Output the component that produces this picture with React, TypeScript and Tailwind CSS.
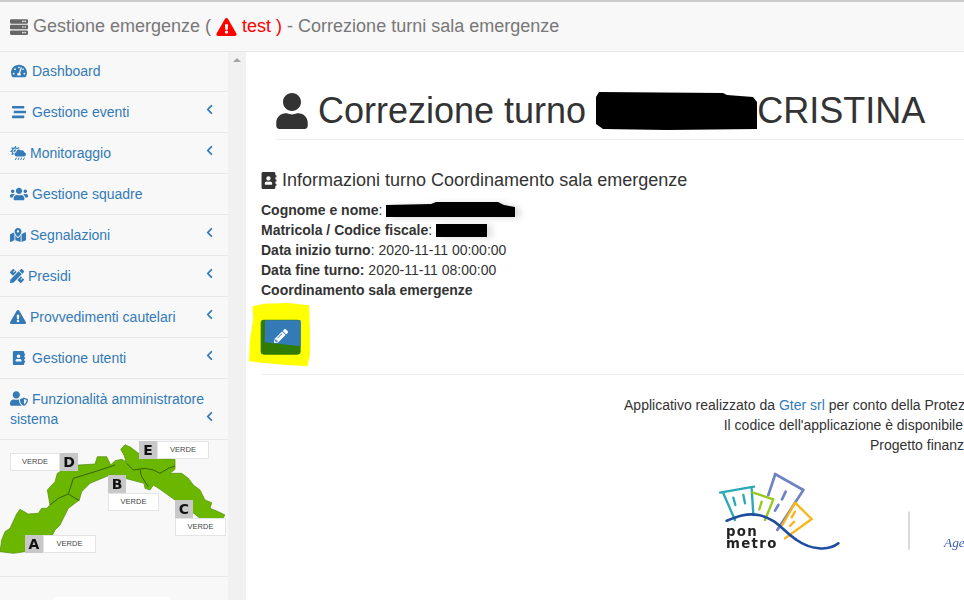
import { ReactNode } from "react";
import {
  FaAddressBook,
  FaChevronLeft,
  FaCloudSunRain,
  FaExclamationTriangle,
  FaMapMarkedAlt,
  FaPencilAlt,
  FaPencilRuler,
  FaServer,
  FaStream,
  FaTachometerAlt,
  FaUser,
  FaUserShield,
  FaUsers,
} from "react-icons/fa";

type MenuItem = {
  label: ReactNode;
  icon: ReactNode;
  pad: string;
  arrow?: boolean;
  height: string;
};

const menu: MenuItem[] = [
  { label: "Dashboard", icon: <FaTachometerAlt className="w-[16px] h-[16px]" />, pad: "pl-[11px] pb-[1px] gap-[5px]", height: "h-[40px]" },
  { label: "Gestione eventi", icon: <FaStream className="w-[14px] h-[14px]" />, pad: "pl-[12px] gap-[6px]", arrow: true, height: "h-[41px]" },
  { label: "Monitoraggio", icon: <FaCloudSunRain className="w-[16px] h-[16px]" />, pad: "pl-[10px] gap-[4px]", arrow: true, height: "h-[41px]" },
  { label: "Gestione squadre", icon: <FaUsers className="w-[18px] h-[16px]" />, pad: "pl-[10px] gap-[4px]", height: "h-[41px]" },
  { label: "Segnalazioni", icon: <FaMapMarkedAlt className="w-[16px] h-[16px]" />, pad: "pl-[10px] gap-[4px]", arrow: true, height: "h-[41px]" },
  { label: "Presidi", icon: <FaPencilRuler className="w-[14px] h-[14px]" />, pad: "pl-[10px] gap-[4px]", arrow: true, height: "h-[41px]" },
  { label: "Provvedimenti cautelari", icon: <FaExclamationTriangle className="w-[16px] h-[16px]" />, pad: "pl-[10px] gap-[4px]", arrow: true, height: "h-[41px]" },
  { label: "Gestione utenti", icon: <FaAddressBook className="w-[14px] h-[14px]" />, pad: "pl-[12px] gap-[6px]", arrow: true, height: "h-[41px]" },
];

const letterBox =
  "w-[18px] h-[18px] bg-[#c8c8c8] flex items-center justify-center font-['DejaVu_Sans'] font-bold text-[14px] text-[#111] blur-[0.3px]";
const verdeBox =
  "h-[18px] bg-white border border-[#e4e4e4] flex items-center justify-center font-['Liberation_Sans'] text-[7.5px] text-[#444]";

// black marker scribbles drawn over the personal data
const Scribble = ({ w, h, points, className }: { w: number; h: number; points: string; className: string }) => (
  <svg viewBox={`0 0 ${w} ${h}`} className={`inline-block ${className}`}>
    <path d={`M${points} Z`} fill="#000" />
  </svg>
);

const Sidebar = () => (
  <div className="w-[228px] shrink-0 bg-[#f8f8f8] h-full flex flex-col text-[14px] leading-[20px] text-[#337ab7]">
    {menu.map((item, i) => (
      <div
        key={i}
        className={`flex items-center border-b border-[#e7e7e7] ${item.height} ${item.pad}`}
      >
        {item.icon}
        <span>{item.label}</span>
        {item.arrow && (
          <FaChevronLeft className="ml-auto mr-[13px] mb-[6px] w-[11px] h-[11px]" />
        )}
      </div>
    ))}
    <div className="h-[61px] flex items-center border-b border-[#e7e7e7] pl-[10px]">
      <div className="w-[197px] shrink-0">
        <FaUserShield className="inline w-[18px] h-[15px] mr-[4px] align-[-2px]" />
        Funzionalità amministratore sistema
      </div>
      <FaChevronLeft className="-ml-[3px] mt-[14px] w-[11px] h-[11px] shrink-0" />
    </div>
    <AlertMap />
    <div className="flex-1 relative">
      <div className="absolute left-[53px] top-[20px] w-[117px] h-[10px] bg-white" />
    </div>
  </div>
);

const AlertMap = () => (
  <div className="relative h-[137px] border-b border-[#e7e7e7] shrink-0 overflow-hidden">
    <svg viewBox="0 0 738 408" className="absolute left-0 top-0 w-[246px] h-[136px] blur-[0.3px]">
      <path
        d="M0 335 L5 300 L15 275 L30 265 L50 222 L60 208 L85 222 L115 220 L125 205 L140 205 L150 195 L142 150 L165 125 L172 100 L180 95 L235 75 L285 72 L292 50 L320 50 L332 75 L345 62 L365 58 L378 65 L372 45 L362 28 L375 14 L392 22 L418 42 L470 55 L525 58 L525 88 L510 100 L545 100 L565 115 L580 135 L600 150 L615 180 L635 188 L630 205 L655 215 L675 225 L665 240 L645 245 L600 235 L575 215 L525 180 L480 148 L460 135 L450 150 L435 145 L432 130 L375 115 L330 105 L270 130 L245 155 L238 180 L205 205 L180 255 L165 270 L150 300 L130 320 L75 335 L40 340 Z"
        fill="#6bb700"
        stroke="#4d8a00"
        strokeWidth="2"
      />
      <path
        d="M150 195 L175 175 L205 162 L238 182 M205 162 L220 115 L285 95 L345 75 M380 70 L400 90 L435 85 L460 90 L480 100 L505 85 L525 78 M420 90 L425 110 L445 140"
        fill="none"
        stroke="#2a4f00"
        strokeWidth="2.5"
      />
    </svg>
    <div className="absolute left-[25px] top-[95px] flex">
      <div className={letterBox}>A</div>
      <div className={`w-[53px] ${verdeBox}`}>VERDE</div>
    </div>
    <div className="absolute left-[10px] top-[13px] flex">
      <div className={`w-[50px] ${verdeBox}`}>VERDE</div>
      <div className={letterBox}>D</div>
    </div>
    <div className="absolute left-[139px] top-[1px] flex">
      <div className={letterBox}>E</div>
      <div className={`w-[52px] ${verdeBox}`}>VERDE</div>
    </div>
    <div className="absolute left-[108px] top-[35px] flex flex-col">
      <div className={letterBox}>B</div>
      <div className={`w-[51px] ${verdeBox}`}>VERDE</div>
    </div>
    <div className="absolute left-[175px] top-[60px] flex flex-col">
      <div className={letterBox}>C</div>
      <div className={`w-[51px] ${verdeBox}`}>VERDE</div>
    </div>
  </div>
);

const Logos = () => (
  <svg viewBox="0 0 822 420" className="ml-[429px] mt-[5px] w-[274px] h-[140px] blur-[0.3px]" fill="none" strokeLinecap="round">
    <g stroke="#29a9b8" strokeWidth="7">
      <path d="M90 98 L192 80 M100 100 L135 180 M185 85 L190 165 M130 113 L136 135 M160 105 L165 130" />
    </g>
    <g stroke="#98c71f" strokeWidth="7">
      <path d="M187 97 L250 118 M250 118 L225 180 M215 125 L208 148" />
    </g>
    <g stroke="#6f83c4" strokeWidth="8">
      <path d="M255 42 L340 90 M255 45 L235 105 M340 90 L262 210 M287 95 L276 118 M265 135 L255 152" />
    </g>
    <g stroke="#f8b418" strokeWidth="7">
      <path d="M315 128 L365 177 L285 235 M315 128 L277 195 M315 155 L305 172 M312 185 L300 198" />
    </g>
    <path
      d="M110 182 C140 170 170 158 205 165 C260 175 280 215 320 240 C360 268 415 275 445 250"
      stroke="#1f4e9e"
      strokeWidth="8"
    />
    <text x="108" y="228" fontFamily="'DejaVu Sans', sans-serif" fontWeight="700" fontSize="40" letterSpacing="4" fill="#222">
      pon
    </text>
    <text x="108" y="265" fontFamily="'DejaVu Sans', sans-serif" fontWeight="700" fontSize="40" letterSpacing="4" fill="#222">
      metro
    </text>
    <path d="M657 156 L657 268" stroke="#b5b5b5" strokeWidth="3" />
    <text x="762" y="262" fontFamily="'Liberation Serif', serif" fontStyle="italic" fontSize="40" fill="#3b62ad">
      Agenzia
    </text>
  </svg>
);

const EditButton = () => (
  <div className="relative mt-[20px] w-[40px] h-[35px]">
    <svg viewBox="0 0 222 216" className="absolute left-[-17px] top-[-22px] w-[74px] h-[72px]">
      <path d="M25 25 L60 17 L130 15 L195 22 L198 100 L198 170 L190 205 L120 200 L60 195 L15 190 L18 125 L28 60 Z" fill="#ffff00" />
      <rect x="50" y="65" width="120" height="105" rx="10" fill="#2f7c00" />
      <path d="M63 67 L170 67 L170 145 L62 133 Z" fill="#337ab7" />
    </svg>
    <button className="absolute left-[13px] top-[9px] text-white">
      <FaPencilAlt className="w-[14px] h-[14px]" />
    </button>
  </div>
);

export default function App() {
  return (
    <main className="w-screen h-screen overflow-hidden flex flex-col bg-white font-['Liberation_Sans',sans-serif] text-[#333]">
      {/* Navbar */}
      <div className="h-[52px] shrink-0 bg-[#f8f8f8] border-t-2 border-b border-t-[#cccccc] border-b-[#e7e7e7] flex items-center pl-[10px] text-[18px] text-[#777] whitespace-nowrap">
        <FaServer className="w-[18px] h-[18px] mr-[5px] text-[#666]" />
        <span>Gestione emergenze (&nbsp;</span>
        <FaExclamationTriangle className="w-[21px] h-[18px] text-[#ff0000] mr-[5px]" />
        <span className="text-[#ff0000]">test )</span>
        <span>&nbsp;- Correzione turni sala emergenze</span>
      </div>

      <div className="flex flex-1 min-h-0">
        <Sidebar />
        {/* Scrollbar */}
        <div className="w-[18px] shrink-0 bg-[#f1f1f1] flex justify-center pt-[6px]">
          <div className="w-0 h-0 border-x-[4px] border-x-transparent border-b-[4px] border-b-[#a3a3a3]" />
        </div>

        {/* Content */}
        <div className="flex-1 overflow-hidden">
          <div className="w-[1428px] ml-[15px]">
            <div className="ml-[15px] mt-[40px] h-[48px] pb-[9px] border-b border-[#eeeeee] flex items-center text-[36px] leading-[40px] whitespace-nowrap">
              <FaUser className="w-[32px] h-[36px] mr-[10px]" />
              <span>Correzione turno&nbsp;</span>
              <Scribble
                w={161}
                h={38}
                points="0 5 L3 0 L127 1 L131 3 L157 5 L161 10 L161 37 L71 38 L7 37 L0 32"
                className="w-[161px] h-[38px]"
              />
              <span>CRISTINA</span>
            </div>

            <div className="mt-[30px] h-[20px] flex items-center text-[18px] leading-[20px]">
              <FaAddressBook className="w-[16px] h-[17px] mr-[5px]" />
              <span>Informazioni turno Coordinamento sala emergenze</span>
            </div>

            <div className="mt-[10px] text-[14px] leading-[20px]">
              <div>
                <b>Cognome e nome</b>:{" "}
                <Scribble
                  w={129}
                  h={15}
                  points="0 3 L45 2 L50 0 L112 0 L118 3 L129 5 L129 15 L0 15"
                  className="w-[129px] h-[15px] align-[-2px] drop-shadow-[5px_1px_3px_rgba(0,0,0,0.15)]"
                />
              </div>
              <div>
                <b>Matricola / Codice fiscale</b>:{" "}
                <Scribble
                  w={51}
                  h={13}
                  points="0 0 L51 0 L51 13 L0 13"
                  className="w-[51px] h-[13px] align-[-2px] drop-shadow-[5px_1px_3px_rgba(0,0,0,0.12)]"
                />
              </div>
              <div>
                <b>Data inizio turno</b>: 2020-11-11 00:00:00
              </div>
              <div>
                <b>Data fine turno:</b> 2020-11-11 08:00:00
              </div>
              <div>
                <b>Coordinamento sala emergenze</b>
              </div>
            </div>

            <EditButton />

            <div className="mt-[19px] border-t border-[#eeeeee]" />

            <div className="mt-[20px] text-center text-[14px] leading-[20px]">
              <div>
                Applicativo realizzato da <span className="text-[#337ab7]">Gter srl</span> per conto della Protezione Civile del Comune di Genova, Area Protezione Civile.
              </div>
              <div>Il codice dell'applicazione è disponibile su GitHub sotto licenza GPL versione 3.0.</div>
              <div>Progetto finanziato da PON Metro</div>
            </div>

            <Logos />
          </div>
        </div>
      </div>
    </main>
  );
}
